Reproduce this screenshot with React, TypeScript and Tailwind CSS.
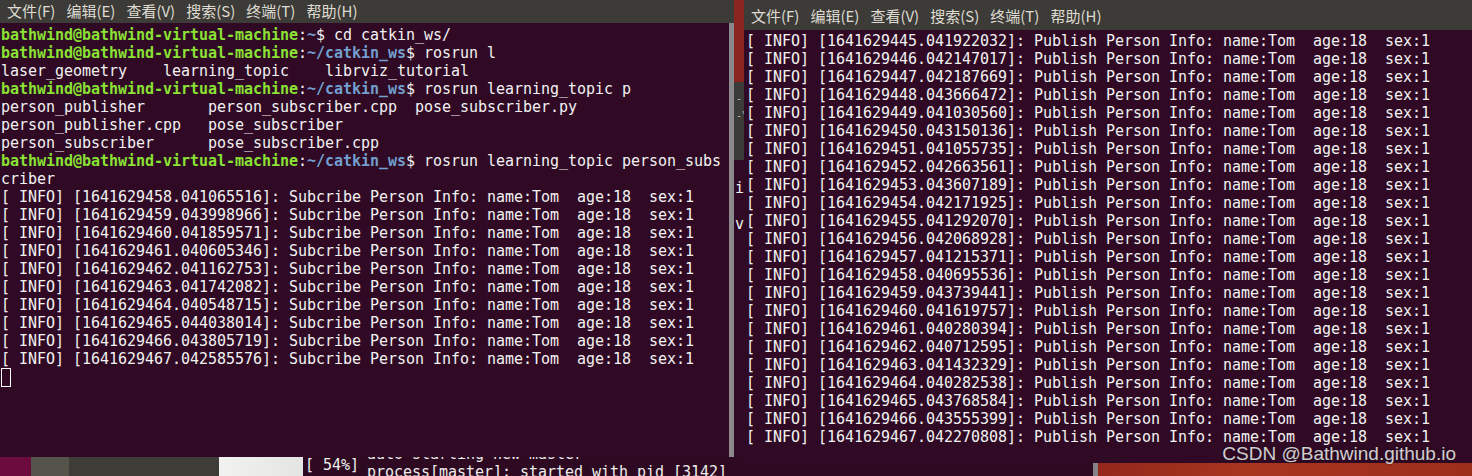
import clsx from "clsx";

const mono = "font-['DejaVu_Sans_Mono','Liberation_Mono',monospace] text-[15px] leading-[18px] tracking-[-0.03px] whitespace-pre";
const cjk = "font-['Noto_Sans_CJK_SC','Noto_Sans',sans-serif]";

const menuItems = ["文件(F)", "编辑(E)", "查看(V)", "搜索(S)", "终端(T)", "帮助(H)"];

const subscribeStamps = [
  "1641629458.041065516",
  "1641629459.043998966",
  "1641629460.041859571",
  "1641629461.040605346",
  "1641629462.041162753",
  "1641629463.041742082",
  "1641629464.040548715",
  "1641629465.044038014",
  "1641629466.043805719",
  "1641629467.042585576",
];

const publishStamps = [
  "1641629445.041922032",
  "1641629446.042147017",
  "1641629447.042187669",
  "1641629448.043666472",
  "1641629449.041030560",
  "1641629450.043150136",
  "1641629451.041055735",
  "1641629452.042663561",
  "1641629453.043607189",
  "1641629454.042171925",
  "1641629455.041292070",
  "1641629456.042068928",
  "1641629457.041215371",
  "1641629458.040695536",
  "1641629459.043739441",
  "1641629460.041619757",
  "1641629461.040280394",
  "1641629462.040712595",
  "1641629463.041432329",
  "1641629464.040282538",
  "1641629465.043768584",
  "1641629466.043555399",
  "1641629467.042270808",
];

function MenuBar({ className }: { className?: string }) {
  return (
    <div
      className={clsx(
        "flex shrink-0 items-center gap-[11px] bg-[#3c3b37] pl-[7px] text-[15px] text-[#dfdbd2]",
        cjk,
        className,
      )}
    >
      {menuItems.map((item) => (
        <span key={item}>{item}</span>
      ))}
    </div>
  );
}

function Prompt({ path, cmd }: { path: string; cmd: string }) {
  return (
    <div>
      <span className="font-bold text-[#8ae234]">bathwind@bathwind-virtual-machine</span>
      <span>:</span>
      <span className="font-bold text-[#729fcf]">{path}</span>
      <span>$ {cmd}</span>
    </div>
  );
}

function LeftTerminal() {
  return (
    <div className="flex h-[457px] flex-col">
      <MenuBar className="h-[23px]" />
      <div className="flex min-h-0 flex-1 bg-[#300a24]">
        <div className={clsx("flex-1 pl-px pt-[3px] text-[#f2f2f2]", mono)}>
          <Prompt path="~" cmd="cd catkin_ws/" />
          <Prompt path="~/catkin_ws" cmd="rosrun l" />
          <div>laser_geometry    learning_topic    librviz_tutorial</div>
          <Prompt path="~/catkin_ws" cmd="rosrun learning_topic p" />
          <div>person_publisher       person_subscriber.cpp  pose_subscriber.py</div>
          <div>person_publisher.cpp   pose_subscriber</div>
          <div>person_subscriber      pose_subscriber.cpp</div>
          <Prompt path="~/catkin_ws" cmd="rosrun learning_topic person_subs" />
          <div>criber</div>
          {subscribeStamps.map((s) => (
            <div key={s}>
              [ INFO] [{s}]: Subcribe Person Info: name:Tom  age:18  sex:1
            </div>
          ))}
          <div className="h-[18px]">
            <span className="inline-block h-[19px] w-[10px] border border-white" />
          </div>
        </div>
        <div className="w-[5px] bg-[#8b898b]" />
      </div>
    </div>
  );
}

function BottomStripLeft() {
  return (
    <div className="flex h-[19px] overflow-hidden">
      <div className="w-[31px] bg-[#6c0b3e]" />
      <div className="w-[38px] bg-[#55544b]" />
      <div className="w-[150px] bg-[#3d3c37]" />
      <div className="w-[84px] bg-[linear-gradient(to_right,#f2f2f0,#e4e4e2)]" />
      <div className={clsx("flex flex-1 items-start bg-[#2d0a22] text-[#eeeeec]", mono)}>
        <span className="mt-[-1px] w-[64px] pl-[2px]">[ 54%]</span>
        <div className="mt-[-12px]">
          <div>auto-starting new master</div>
          <div>process[master]: started with pid [3142]</div>
        </div>
      </div>
    </div>
  );
}

function Gap() {
  return (
    <div className="flex w-[10px] flex-col">
      <div className="h-[82px] bg-[#8a2520]" />
      <div className="flex h-[78px] flex-col overflow-hidden whitespace-nowrap bg-[#3b3b37] pl-[2px] pt-[8px] font-['DejaVu_Sans_Mono',monospace] text-[10px] leading-[17px] text-[#bdbdb8]">
        <span>-</span>
        <span>-\</span>
      </div>
      <div className={clsx("flex-1 bg-[#300a24] pl-px pt-[19px] text-[#f2f2f2]", mono)}>
        <div>i</div>
        <div> </div>
        <div>v</div>
      </div>
      <div className="h-[19px] bg-[#2d0a22]" />
    </div>
  );
}

function RightTerminal() {
  return (
    <div className="flex h-[463px] flex-col">
      <MenuBar className="h-[30px] pt-[2px]" />
      <div className={clsx("flex-1 bg-[#300a24] pl-[2px] pt-[2px] text-[#f2f2f2]", mono)}>
        {publishStamps.map((s) => (
          <div key={s}>
            [ INFO] [{s}]: Publish Person Info: name:Tom  age:18  sex:1
          </div>
        ))}
      </div>
    </div>
  );
}

export default function App() {
  return (
    <div className="relative flex h-[476px] w-[1472px] overflow-hidden bg-[#300a24]">
      <div className="flex w-[734px] flex-col">
        <LeftTerminal />
        <BottomStripLeft />
      </div>
      <Gap />
      <div className="flex flex-1 flex-col">
        <RightTerminal />
        <div className="flex h-[13px]">
          <div className="w-[349px] bg-[#2d0a22]" />
          <div className="w-[5px] bg-[#848284]" />
          <div className="flex-1 bg-[linear-gradient(to_right,#92271a,#a8361f_40%,#9c2e1c)]" />
        </div>
      </div>
      <div className="absolute right-[16px] top-[444px] font-['Liberation_Sans',Arial,sans-serif] text-[19px] leading-[19px] text-white/80 [text-shadow:0_0_2px_rgba(0,0,0,0.7)]">
        CSDN @Bathwind.github.io
      </div>
    </div>
  );
}
